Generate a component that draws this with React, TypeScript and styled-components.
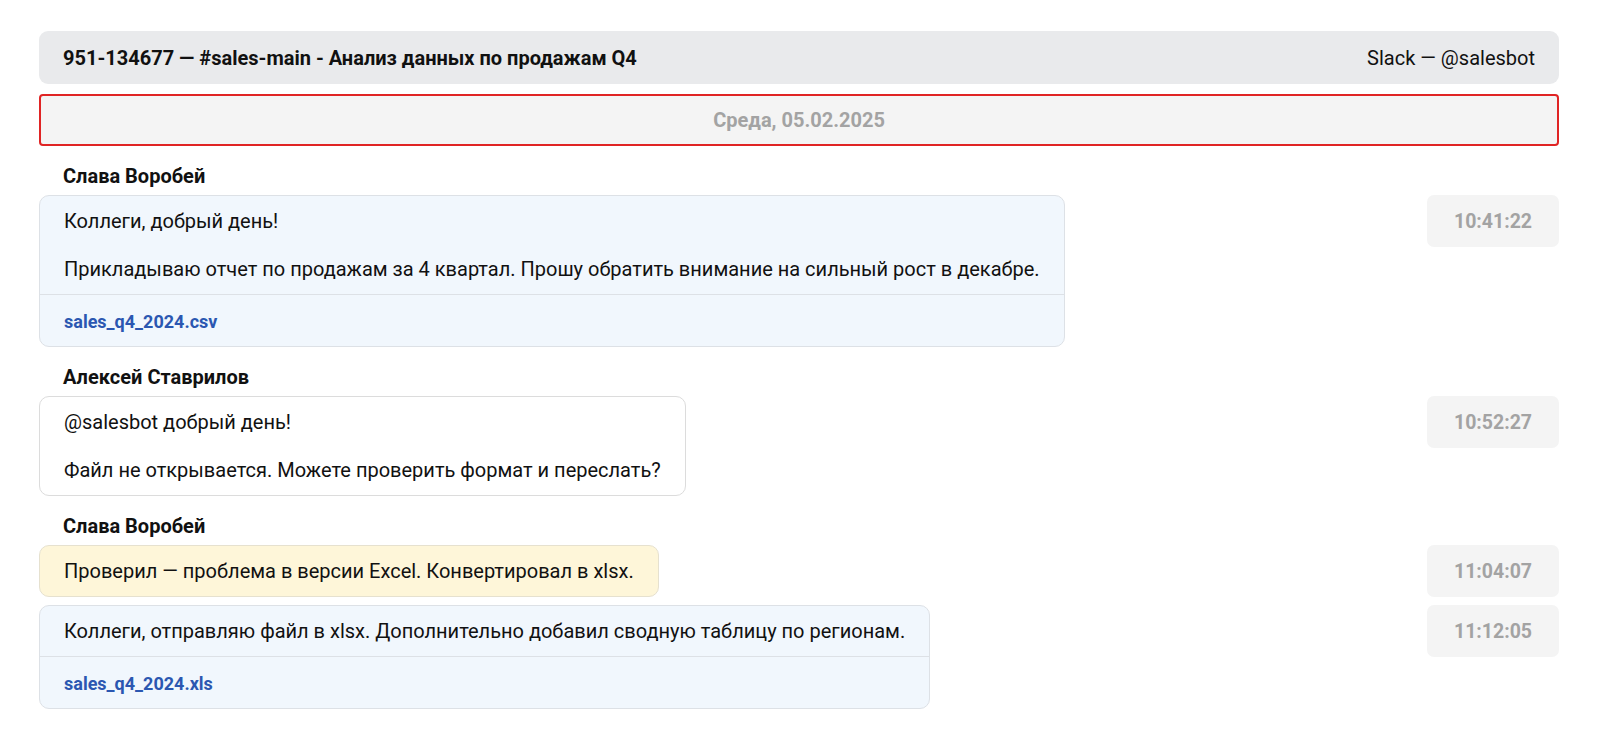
import React from "react";
import styled, { createGlobalStyle } from "styled-components";

const GlobalStyle = createGlobalStyle`
  html, body { margin: 0; padding: 0; background: #ffffff; }
  body { font-family: Roboto, "Liberation Sans", Arial, sans-serif; color: #111; }
`;

const Page = styled.div`
  padding: 31px 38px 30px 39px;
  display: flex;
  flex-direction: column;
`;

const Header = styled.div`
  display: flex;
  align-items: center;
  justify-content: space-between;
  height: 53px;
  padding: 0 24px;
  background: #e9eaec;
  border-radius: 9px;
  font-size: 20px;
  margin-bottom: 10px;
`;

const Title = styled.div`
  font-weight: 700;
`;

const Source = styled.div`
  font-weight: 400;
`;

const DateBar = styled.div`
  height: 48px;
  display: flex;
  align-items: center;
  justify-content: center;
  background: #f4f4f4;
  border: 2px solid #e02424;
  border-radius: 4px;
  color: #a3a3a3;
  font-weight: 700;
  font-size: 20px;
`;

const Feed = styled.div`
  display: flex;
  flex-direction: column;
  gap: 8px;
  margin-top: 8px;
`;

const Author = styled.div`
  padding: 11px 24px 0;
  font-weight: 700;
  font-size: 20px;
  line-height: 22px;
`;

const Row = styled.div`
  display: flex;
  align-items: flex-start;
  justify-content: space-between;
  gap: 24px;
`;

type Tone = "blue" | "white" | "yellow";

const tones: Record<Tone, { bg: string; border: string }> = {
  blue: { bg: "#f1f7fd", border: "#dde1e6" },
  white: { bg: "#ffffff", border: "#dcdcdc" },
  yellow: { bg: "#fef6d9", border: "#e6e1cf" },
};

const Bubble = styled.div<{ $tone: Tone }>`
  background: ${(p) => tones[p.$tone].bg};
  border: 1px solid ${(p) => tones[p.$tone].border};
  border-radius: 10px;
  font-size: 20px;
  line-height: 24px;
  width: fit-content;
`;

const BubbleText = styled.div`
  padding: 13px 24px;
  white-space: pre-wrap;
`;

const Attachment = styled.div`
  padding: 15px 24px 12px;
  border-top: 1px solid #dde1e6;
  font-weight: 700;
  font-size: 18px;
  color: #2b57b1;
`;

const Time = styled.div`
  flex: none;
  width: 132px;
  height: 52px;
  display: flex;
  align-items: center;
  justify-content: center;
  background: #f4f4f4;
  border-radius: 7px;
  color: #a3a3a3;
  font-weight: 700;
  font-size: 19.5px;
`;

type Msg = {
  author?: string;
  text: string;
  tone: Tone;
  file?: string;
  time: string;
};

const messages: Msg[] = [
  {
    author: "Слава Воробей",
    text: "Коллеги, добрый день!\n\nПрикладываю отчет по продажам за 4 квартал. Прошу обратить внимание на сильный рост в декабре.",
    tone: "blue",
    file: "sales_q4_2024.csv",
    time: "10:41:22",
  },
  {
    author: "Алексей Ставрилов",
    text: "@salesbot добрый день!\n\nФайл не открывается. Можете проверить формат и переслать?",
    tone: "white",
    time: "10:52:27",
  },
  {
    author: "Слава Воробей",
    text: "Проверил — проблема в версии Excel. Конвертировал в xlsx.",
    tone: "yellow",
    time: "11:04:07",
  },
  {
    text: "Коллеги, отправляю файл в xlsx. Дополнительно добавил сводную таблицу по регионам.",
    tone: "blue",
    file: "sales_q4_2024.xls",
    time: "11:12:05",
  },
];

export default function App() {
  return (
    <>
      <GlobalStyle />
      <Page>
        <Header>
          <Title>951-134677 — #sales-main - Анализ данных по продажам Q4</Title>
          <Source>Slack — @salesbot</Source>
        </Header>
        <DateBar>Среда, 05.02.2025</DateBar>
        <Feed>
          {messages.map((m, i) => (
            <React.Fragment key={i}>
              {m.author && <Author>{m.author}</Author>}
              <Row>
                <Bubble $tone={m.tone}>
                  <BubbleText>{m.text}</BubbleText>
                  {m.file && <Attachment>{m.file}</Attachment>}
                </Bubble>
                <Time>{m.time}</Time>
              </Row>
            </React.Fragment>
          ))}
        </Feed>
      </Page>
    </>
  );
}
